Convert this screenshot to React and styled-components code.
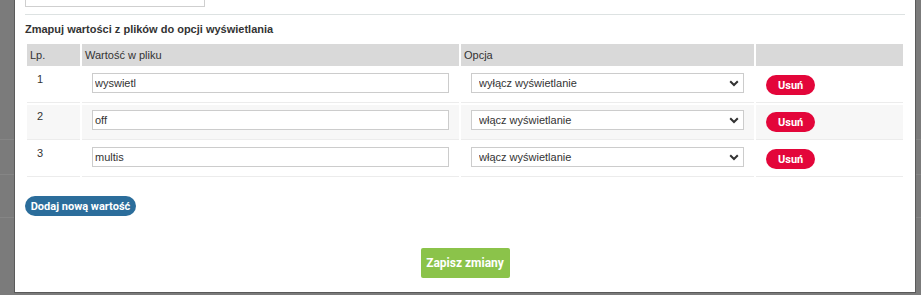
import React from "react";
import styled, { createGlobalStyle } from "styled-components";

const Global = createGlobalStyle`
  html, body { margin: 0; padding: 0; }
  body {
    width: 921px;
    height: 295px;
    overflow: hidden;
    background: #7b7b7b;
    font-family: "Liberation Sans", Arial, sans-serif;
  }
`;

const Backdrop = styled.div`
  display: flex;
  flex-direction: column;
  padding-top: 139px;
`;

const BackdropRow = styled.div`
  height: ${(p) => p.$h}px;
  border-top: 1px solid #858585;
  box-sizing: border-box;
`;

const Modal = styled.div`
  position: fixed;
  left: 14px;
  top: -30px;
  bottom: 2px;
  width: 902px;
  box-sizing: border-box;
  background: #fff;
  border: 1px solid #5a5a5a;
  padding: 12px 10px 0;
  display: flex;
  flex-direction: column;
  align-items: flex-start;
  color: #333;
`;

const FieldInput = styled.div`
  width: 180px;
  height: 24px;
  box-sizing: border-box;
  border: 1px solid #cfcfcf;
`;

const Rule = styled.hr`
  align-self: stretch;
  margin: 7px 0 0;
  border: 0;
  height: 1px;
  background: #dde2e2;
`;

const Title = styled.h3`
  margin: 7px 0 0;
  font-size: 11px;
  line-height: 15px;
  font-weight: bold;
  color: #333;
`;

const Table = styled.table`
  margin-top: 5px;
  width: 880px;
  table-layout: fixed;
  border-collapse: separate;
  border-spacing: 2px;
  font-size: 11px;
  color: #333;
`;

const Th = styled.th`
  width: ${(p) => p.$w}px;
  height: 22px;
  box-sizing: border-box;
  padding: 0 3px;
  background: #d9d9d9;
  font-weight: normal;
  text-align: left;
  vertical-align: middle;
  line-height: 13px;
`;

const Tr = styled.tr`
  &:nth-child(even) td {
    background: #f7f7f7;
  }
`;

const Td = styled.td`
  padding: ${(p) => (p.$btn ? "7px 10px 7px" : "5px 10px 9px")};
  border-bottom: 1px solid #ececec;
  vertical-align: top;
  line-height: 13px;
  height: 20px;
`;

const TextInput = styled.input`
  display: block;
  width: 100%;
  height: 20px;
  box-sizing: border-box;
  margin: 0;
  border: 1px solid #cccccc;
  padding: 0 2px;
  font-family: "Liberation Sans", Arial, sans-serif;
  font-size: 11px;
  color: #333;
  background: #fff;
  outline: none;
`;

const SelectWrap = styled.div`
  position: relative;
  height: 20px;
`;

const Select = styled.select`
  display: block;
  width: 100%;
  height: 20px;
  box-sizing: border-box;
  margin: 0;
  border: 1px solid #cccccc;
  border-radius: 0;
  padding: 0 20px 0 7px;
  appearance: none;
  -webkit-appearance: none;
  background: #fff;
  font-family: "Liberation Sans", Arial, sans-serif;
  font-size: 11px;
  color: #333;
  outline: none;
`;

const Chevron = styled.svg`
  position: absolute;
  right: 5px;
  top: 7px;
  pointer-events: none;
`;

const Pill = styled.button`
  display: inline-flex;
  align-items: center;
  justify-content: center;
  height: 20px;
  box-sizing: border-box;
  border: 0;
  border-radius: 10px;
  padding: 0 ${(p) => p.$px}px;
  background: ${(p) => p.$bg};
  color: #fff;
  font-family: Roboto, "Liberation Sans", Arial, sans-serif;
  font-weight: bold;
  font-size: 11px;
  cursor: pointer;
`;

const AddButton = styled(Pill)`
  margin-top: 17px;
  width: 111px;
  padding: 0;
`;

const SaveButton = styled.button`
  align-self: center;
  margin-top: 32px;
  height: 30px;
  width: 89px;
  padding: 0;
  border: 0;
  border-radius: 2px;
  background: #8bc34a;
  color: #fff;
  font-family: Roboto, "Liberation Sans", Arial, sans-serif;
  font-weight: bold;
  font-size: 12px;
  cursor: pointer;
`;

const OPTIONS = ["wyłącz wyświetlanie", "włącz wyświetlanie"];

const rows = [
  { lp: 1, value: "wyswietl", option: "wyłącz wyświetlanie" },
  { lp: 2, value: "off", option: "włącz wyświetlanie" },
  { lp: 3, value: "multis", option: "włącz wyświetlanie" },
];

export default function App() {
  return (
    <>
      <Global />
      <Backdrop>
        <BackdropRow $h={35} />
        <BackdropRow $h={43} />
        <BackdropRow $h={80} />
      </Backdrop>
      <Modal>
        <FieldInput />
        <Rule />
        <Title>Zmapuj wartości z plików do opcji wyświetlania</Title>
        <Table>
          <thead>
            <tr>
              <Th $w={53}>Lp.</Th>
              <Th $w={377}>Wartość w pliku</Th>
              <Th $w={293}>Opcja</Th>
              <Th $w={147}></Th>
            </tr>
          </thead>
          <tbody>
            {rows.map((r) => (
              <Tr key={r.lp}>
                <Td>{r.lp}</Td>
                <Td>
                  <TextInput defaultValue={r.value} />
                </Td>
                <Td>
                  <SelectWrap>
                    <Select defaultValue={r.option}>
                      {OPTIONS.map((o) => (
                        <option key={o} value={o}>
                          {o}
                        </option>
                      ))}
                    </Select>
                    <Chevron width="10" height="7" viewBox="0 0 10 7">
                      <path
                        d="M1.2 1.2 L5 5 L8.8 1.2"
                        fill="none"
                        stroke="#333"
                        strokeWidth="2"
                      />
                    </Chevron>
                  </SelectWrap>
                </Td>
                <Td $btn>
                  <Pill $bg="#e3063a" $px={12}>
                    Usuń
                  </Pill>
                </Td>
              </Tr>
            ))}
          </tbody>
        </Table>
        <AddButton $bg="#2b6d9b">Dodaj nową wartość</AddButton>
        <SaveButton>Zapisz zmiany</SaveButton>
      </Modal>
    </>
  );
}
